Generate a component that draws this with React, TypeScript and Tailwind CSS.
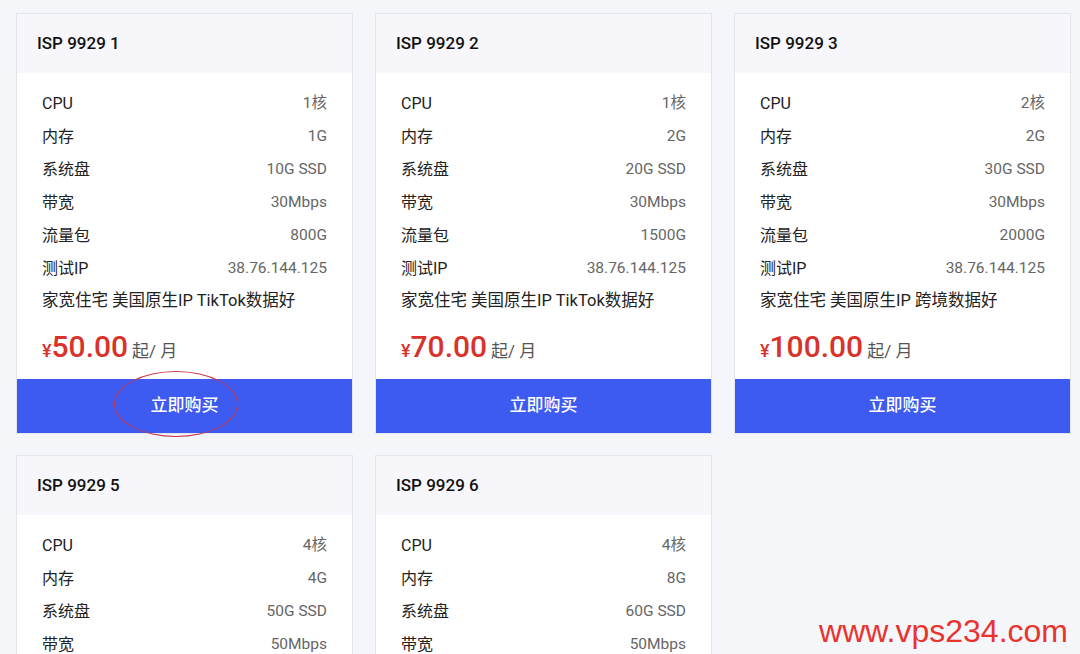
const plans = [
  { name: "ISP 9929 1", cpu: "1核", mem: "1G", disk: "10G SSD", bw: "30Mbps", flow: "800G", note: "家宽住宅 美国原生IP TikTok数据好", price: "50.00" },
  { name: "ISP 9929 2", cpu: "1核", mem: "2G", disk: "20G SSD", bw: "30Mbps", flow: "1500G", note: "家宽住宅 美国原生IP TikTok数据好", price: "70.00" },
  { name: "ISP 9929 3", cpu: "2核", mem: "2G", disk: "30G SSD", bw: "30Mbps", flow: "2000G", note: "家宽住宅 美国原生IP 跨境数据好", price: "100.00" },
  { name: "ISP 9929 5", cpu: "4核", mem: "4G", disk: "50G SSD", bw: "50Mbps", flow: "3000G", note: "家宽住宅 美国原生IP TikTok数据好", price: "150.00" },
  { name: "ISP 9929 6", cpu: "4核", mem: "8G", disk: "60G SSD", bw: "50Mbps", flow: "4000G", note: "家宽住宅 美国原生IP TikTok数据好", price: "200.00" },
];

type Plan = (typeof plans)[number];

function Row({ label, value }: { label: string; value: string }) {
  return (
    <div className="flex h-[33px] items-center justify-between">
      <span className="text-[#222]">{label}</span>
      <span className="text-[15.5px] text-[#666]">{value}</span>
    </div>
  );
}

function PlanCard({ plan, marked }: { plan: Plan; marked?: boolean }) {
  return (
    <div className="border border-[#e4e5ea] bg-white">
      {/* header */}
      <div className="flex h-[59px] items-center bg-[#f7f7fb] px-5 text-[17px] font-medium text-[#111]">
        {plan.name}
      </div>

      <div className="px-[25px] pt-[14px] text-[16px]">
        <Row label="CPU" value={plan.cpu} />
        <Row label="内存" value={plan.mem} />
        <Row label="系统盘" value={plan.disk} />
        <Row label="带宽" value={plan.bw} />
        <Row label="流量包" value={plan.flow} />
        <Row label="测试IP" value="38.76.144.125" />
        <div className="flex h-[33px] items-center text-[16.5px] text-[#222]">{plan.note}</div>

        <div className="flex h-[61px] items-baseline pt-[14px]">
          <span className="text-[18px] font-medium text-[#d8322b]">¥</span>
          <span className="text-[30px] font-medium leading-none text-[#d8322b]">{plan.price}</span>
          <span className="ml-1 text-[17px] text-[#555]">起/ 月</span>
        </div>
      </div>

      <div className="relative flex h-[54px] items-center justify-center bg-[#3d5af1] text-[17px] font-medium text-white">
        立即购买
        {marked && (
          <div className="absolute left-[97px] top-[-8px] h-[66px] w-[124px] rounded-[50%] border-[1.5px] border-[#c43a4e]" />
        )}
      </div>
    </div>
  );
}

export default function App() {
  return (
    <div
      className="relative h-[654px] w-[1080px] overflow-hidden bg-[#f5f6fa]"
      style={{ fontFamily: "Roboto, 'Noto Sans CJK SC', sans-serif" }}
    >
      <div className="grid grid-cols-[337px_337px_337px] gap-x-[22px] gap-y-[21px] pl-4 pt-[13px]">
        {plans.map((p, i) => (
          <PlanCard key={p.name} plan={p} marked={i === 0} />
        ))}
      </div>

      {/* watermark */}
      <div
        className="absolute bottom-[7px] right-[12px] text-[32px] leading-none text-[#e8332f]"
        style={{ fontFamily: "'Liberation Sans', Arial, sans-serif" }}
      >
        www.vps234.com
      </div>
    </div>
  );
}
